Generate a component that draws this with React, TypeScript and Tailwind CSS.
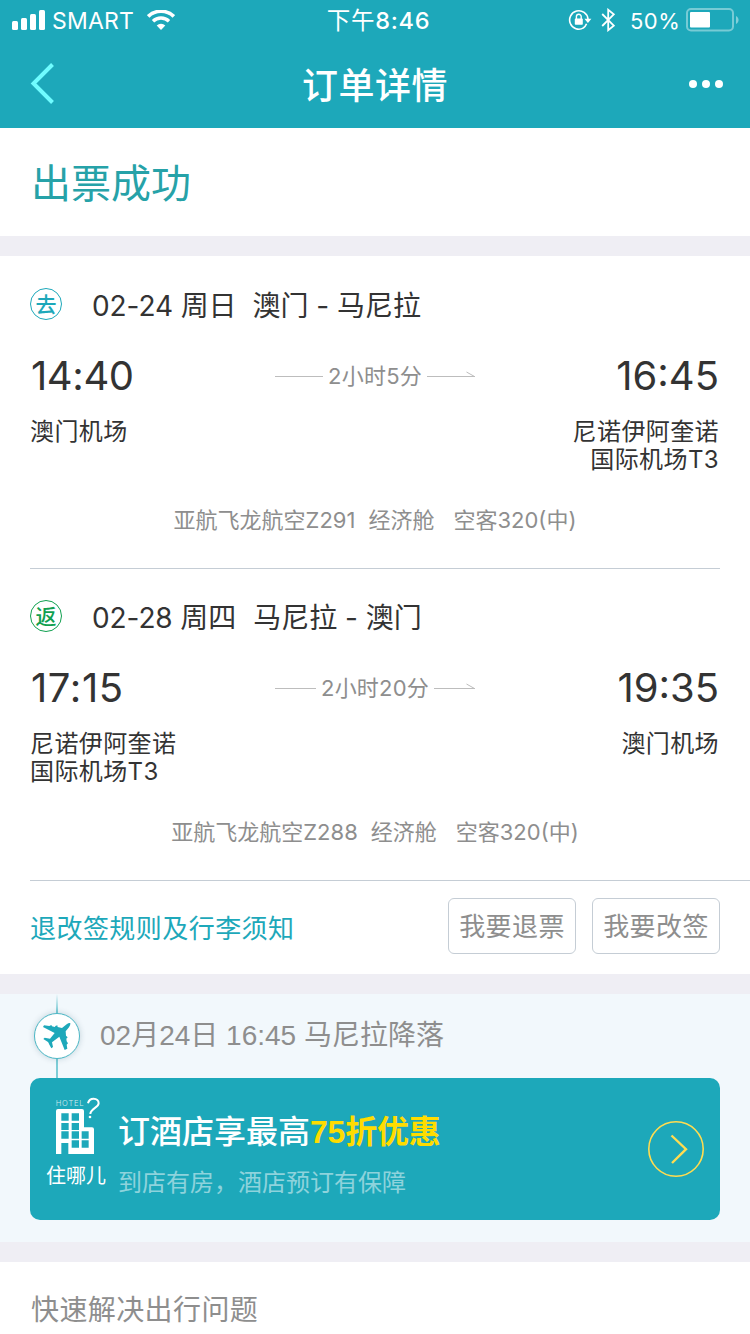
import type { ReactNode } from 'react';

type Leg = {
  tag: string;
  tagClass: string;
  date: string;
  route: string;
  routeClass: string;
  depart: string;
  departClass: string;
  arrive: string;
  duration: string;
  from: string[];
  to: string[];
  flight: string;
  cabin: string;
  plane: string;
};

const legs: Leg[] = [
  {
    tag: '去',
    tagClass: 'border-[#1da8ba] text-[#1da8ba]',
    date: '02-24 周日',
    route: '澳门 - 马尼拉',
    routeClass: 'ml-[16px]',
    depart: '14:40',
    departClass: 'tracking-[-0.4px]',
    arrive: '16:45',
    duration: '2小时5分',
    from: ['澳门机场'],
    to: ['尼诺伊阿奎诺', '国际机场T3'],
    flight: '亚航飞龙航空Z291',
    cabin: '经济舱',
    plane: '空客320(中)',
  },
  {
    tag: '返',
    tagClass: 'border-[#10a050] text-[#10a050]',
    date: '02-28 周四',
    route: '马尼拉 - 澳门',
    routeClass: 'ml-[17px]',
    depart: '17:15',
    departClass: 'tracking-[0.6px]',
    arrive: '19:35',
    duration: '2小时20分',
    from: ['尼诺伊阿奎诺', '国际机场T3'],
    to: ['澳门机场'],
    flight: '亚航飞龙航空Z288',
    cabin: '经济舱',
    plane: '空客320(中)',
  },
];

function StatusBar() {
  return (
    <div className="grid h-10 grid-cols-[1fr_auto_1fr] items-center pl-3 pr-[11px] text-white">
      <div className="flex items-center">
        <svg width="33" height="20" viewBox="0 0 33 20" fill="currentColor">
          <rect x="0" y="11" width="6" height="9" rx="1.5" />
          <rect x="9" y="8" width="6" height="12" rx="1.5" />
          <rect x="18" y="4" width="6" height="16" rx="1.5" />
          <rect x="27" y="0" width="6" height="20" rx="1.5" />
        </svg>
        <span className="ml-[7px] w-[83px] whitespace-nowrap pt-[2px] text-[23px] leading-8 tracking-[0.2px]">SMART</span>
        <svg className="ml-3" width="28" height="20" viewBox="0 0 28 20" fill="none" stroke="currentColor">
          <path d="M1.2 6.4a18.5 18.5 0 0 1 25.6 0" strokeWidth="3.6" />
          <path d="M6 11.2a11.6 11.6 0 0 1 16 0" strokeWidth="3.4" />
          <path d="M14 20l-4.3-4.4a6.2 6.2 0 0 1 8.6 0z" fill="currentColor" stroke="none" />
        </svg>
      </div>
      <div className="pl-[6px] pt-[2px] text-[23.5px] leading-8 tracking-[0.7px]">
        下午<span className="font-medium">8:46</span>
      </div>
      <div className="flex items-center justify-end">
        <svg width="24" height="22" viewBox="0 0 24 22" fill="none" stroke="currentColor" strokeWidth="1.6">
          <path d="M15.5 18.9A9.200 9.200 0 1 1 20 10" />
          <path d="M16.400 9.800h7L19.900 14z" fill="currentColor" stroke="none" />
          <path d="M18.600 14.800a9.200 9.200 0 0 1-3.400 4.200" />
          <rect x="6.800" y="9.600" width="8" height="6.200" rx="0.800" fill="currentColor" stroke="none" />
          <path d="M8.400 10V7.600a2.400 2.400 0 0 1 4.800 0V10" strokeWidth="1.400" />
        </svg>
        <svg className="ml-[9px]" width="15" height="24" viewBox="0 0 15 24" fill="none" stroke="currentColor" strokeWidth="1.800">
          <path d="M1.200 6l11.600 11.600-5.600 4.600V1.800l5.600 4.600L1.200 18" />
        </svg>
        <span className="ml-[14px] w-[49px] whitespace-nowrap pt-[2px] text-[22px] leading-8 tracking-[0.500px]">50%</span>
        <svg className="ml-[7px]" width="53" height="24" viewBox="0 0 53 24" fill="none">
          <rect x="1" y="1" width="46" height="21.400" rx="4" stroke="#fff" strokeOpacity="0.400" strokeWidth="2" />
          <rect x="4" y="4" width="20" height="15.400" rx="1" fill="#fff" />
          <path d="M50 8c3.400 1.600 3.400 6.400 0 8z" fill="#fff" fillOpacity="0.450" />
        </svg>
      </div>
    </div>
  );
}

function NavBar() {
  return (
    <div className="grid h-[88px] grid-cols-[1fr_auto_1fr] items-center pl-[30px] pr-[27px]">
      <svg width="26" height="44" viewBox="0 0 26 44" fill="none" stroke="#70fcff" strokeWidth="4">
        <path d="M22.500 2.500L3.500 21.500l19 19" />
      </svg>
      <h1 className="pr-[3px] pt-[3px] text-[36px] font-medium tracking-[0.5px] text-white">订单详情</h1>
      <div className="flex justify-end gap-[4.500px]">
        <i className="h-[8.500px] w-[8.500px] rounded-full bg-white" />
        <i className="h-[8.500px] w-[8.500px] rounded-full bg-white" />
        <i className="h-[8.500px] w-[8.500px] rounded-full bg-white" />
      </div>
    </div>
  );
}

function Airport({ lines, className }: { lines: string[]; className?: string }) {
  return (
    <div className={className}>
      {lines.map((line) => (
        <p key={line}>{line}</p>
      ))}
    </div>
  );
}

function FlightLeg({ leg }: { leg: Leg }) {
  return (
    <div className="h-[312px] px-[30px] text-[#333]">
      <div className="flex h-24 items-center text-[28px]">
        <span className={`flex h-8 w-8 items-center justify-center rounded-full border pt-px text-[21px] font-medium ${leg.tagClass}`}>
          {leg.tag}
        </span>
        <span className="ml-[30px] whitespace-nowrap pt-[3px] tracking-[-0.1px]">{leg.date}</span>
        <span className={`whitespace-nowrap pt-[3px] ${leg.routeClass}`}>{leg.route}</span>
      </div>

      <div className="grid h-12 grid-cols-[1fr_200px_1fr] items-center">
        <span className={`pl-px text-[40px] leading-[48px] ${leg.departClass}`}>{leg.depart}</span>
        <div className="flex items-center gap-[5px] text-[22px] leading-8 text-[#8e8e8e]">
          <i className="h-px grow bg-[#bdbdbd]" />
          <span className="tracking-[0.2px]">{leg.duration}</span>
          <span className="relative h-px grow bg-[#bdbdbd]">
            <svg className="absolute -top-[5px] right-0" width="10" height="6" viewBox="0 0 10 6" fill="none" stroke="#bdbdbd">
              <path d="M1.500 1L9.500 5.500" />
            </svg>
          </span>
        </div>
        <span className="pr-px text-right text-[40px] leading-[48px]">{leg.arrive}</span>
      </div>

      <div className="flex h-[72px] justify-between pt-[18px] text-[24px] leading-[28px] tracking-[0.4px]">
        <Airport lines={leg.from} />
        <Airport lines={leg.to} className="pr-px text-right" />
      </div>

      <div className="flex h-24 items-center justify-center whitespace-nowrap text-[22px] text-[#8e8e8e]">
        <span>{leg.flight}</span>
        <span className="ml-[13px]">{leg.cabin}</span>
        <span className="ml-[19px]">{leg.plane}</span>
      </div>
    </div>
  );
}

function ActionButton({ children }: { children: ReactNode }) {
  return (
    <button className="flex h-14 w-32 items-center justify-center rounded-md border border-[#c5cdd5] text-[26px] tracking-[0.4px] text-[#8e8e8e]">
      {children}
    </button>
  );
}

function PlaneBadge() {
  return (
    <div className="relative flex h-[84px] w-[46px] shrink-0 justify-center">
      <div className="h-full w-[2px] bg-linear-to-b from-[#f2f8fc] via-[#7dcdd7] via-20% to-[#7dcdd7]" />
      <div className="absolute left-0 top-[19px] flex h-[46px] w-[46px] items-center justify-center rounded-full border-[1.500px] border-[#4bb7c5] bg-white shadow-[0_0_6px_rgba(0,60,80,0.2)]">
        <svg width="30" height="30" viewBox="36 41 90 90" fill="#1da8ba">
          <path d="M121 47Q116 46 110 51L96 62 83 59 82 54 76 56 75 59 66 57 64 53 58 56 42 54 39 59 74 77 60 94 44 91 40 95 54 104Q57 108 57 110L64 123 69 119 66 105 88 88 104 128 112 124 110 112 114 108 110 102 109 94 113 90 108 85 107 72 117 60Q122 52 121 47Z" />
        </svg>
      </div>
    </div>
  );
}

function HotelIcon() {
  return (
    <svg width="46" height="58" viewBox="75 267 138 174" fill="#fff">
      <text x="77" y="293" fontSize="23" textLength="84" fontWeight="300" fillOpacity="0.8">
        HOTEL
      </text>
      <path d="M174 286c2-9 9-14 17-14 9 0 15 6 15 14 0 13-24 15-25 32" fill="none" stroke="#fff" strokeWidth="6" />
      <circle cx="180" cy="327" r="4" />
      {/* 楼体，窗户用 evenodd 镂空 */}
      <path
        fillRule="evenodd"
        d="M78 438V309q0-6 6-6h72q6 0 6 6v49h24q6 0 6 6v74h-77v-33H94v33zM94 316v22h22v-22zM125 316v22h22v-22zM94 345v21h22v-21zM125 345v21h22v-21zM94 370v22h22v-22zM125 370v22h22v-22zM155 370v22h21v-22zM125 397v22h22v-22zM155 397v22h21v-22z"
      />
    </svg>
  );
}

function HotelBanner() {
  return (
    <div className="flex h-[142px] items-center rounded-[10px] bg-[#1da8ba] pr-4">
      <div className="flex h-full w-[88px] shrink-0 flex-col pt-[19px]">
        <div className="h-[58px] pl-[25px]">
          <HotelIcon />
        </div>
        <span className="mt-[7px] pl-[16px] text-[20px] leading-7 text-white">住哪儿</span>
      </div>
      <div className="h-full grow pt-[34px]">
        <p className="text-[32px] font-medium leading-10 text-white">
          订酒店享最高
          <span className="font-['Liberation_Sans','Noto_Sans_CJK_SC',sans-serif] font-bold tracking-[-0.2px] text-[#ffdc00]">
            75折优惠
          </span>
        </p>
        <p className="mt-[15px] text-[24px] leading-8 text-white/50">到店有房，酒店预订有保障</p>
      </div>
      <svg width="56" height="56" viewBox="0 0 56 56" fill="none" stroke="#ffdc50">
        <circle cx="28" cy="28" r="27.200" strokeWidth="1.600" />
        <path d="M23.500 14.500L38 28.200 24 42" strokeWidth="2.400" />
      </svg>
    </div>
  );
}

export default function App() {
  return (
    <main className="flex h-[1334px] w-[750px] flex-col overflow-hidden bg-[#efeef4] font-['Inter','Noto_Sans_CJK_SC',sans-serif]">
      <header className="shrink-0 bg-[#1da8ba]">
        <StatusBar />
        <NavBar />
      </header>

      <section className="flex h-[108px] shrink-0 items-center bg-white pl-[31px] pt-[3px]">
        <h2 className="text-[40px] text-[#26a2a8]">出票成功</h2>
      </section>

      <section className="mt-5 shrink-0 bg-white">
        <FlightLeg leg={legs[0]} />
        <div className="mx-[30px] -mb-px h-px bg-[#c5cdd5]" />
        <FlightLeg leg={legs[1]} />
        <div className="-mb-px ml-[30px] h-px bg-[#c5cdd5]" />
        <div className="flex h-[94px] items-start px-[30px] pt-[18px]">
          <a className="grow text-[26px] leading-[62px] tracking-[0.45px] text-[#1da8ba]">退改签规则及行李须知</a>
          <div className="flex gap-4">
            <ActionButton>我要退票</ActionButton>
            <ActionButton>我要改签</ActionButton>
          </div>
        </div>
      </section>

      <section className="mt-5 h-[248px] shrink-0 bg-[#f2f8fc] px-[30px]">
        <div className="flex h-[84px] pl-1">
          <PlaneBadge />
          <p className="ml-5 font-['Liberation_Sans','Noto_Sans_CJK_SC',sans-serif] text-[28px] leading-[83px] text-[#8e8e8e]">
            02月24日 16:45 马尼拉降落
          </p>
        </div>
        <HotelBanner />
      </section>

      <section className="mt-5 grow bg-white pl-[31px]">
        <h3 className="text-[28px] leading-[97px] tracking-[0.4px] text-[#8e8e8e]">快速解决出行问题</h3>
      </section>
    </main>
  );
}
